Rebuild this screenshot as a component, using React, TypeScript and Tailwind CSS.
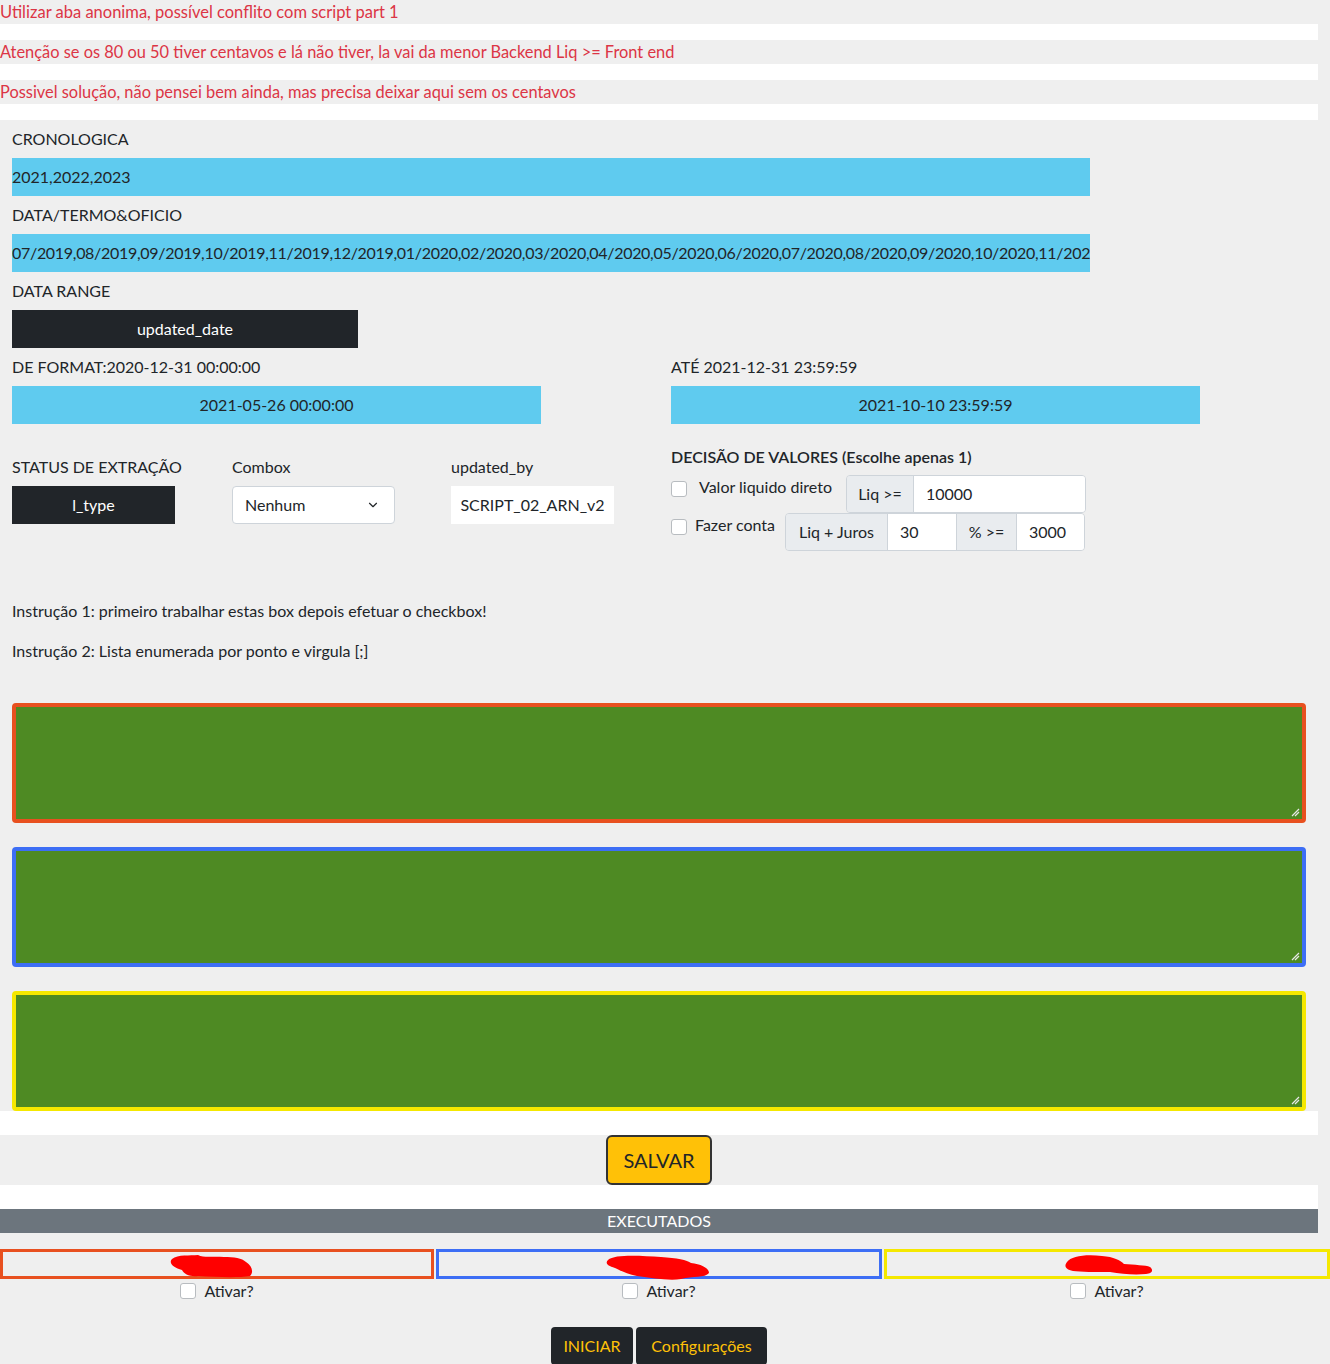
import { ChevronDown } from "lucide-react";

const textareas = [
  { border: "border-[#e8501f]" },
  { border: "border-[#3d6ef5]" },
  { border: "border-[#f5e800]" },
];

function Scribble({ variant }: { variant: number }) {
  // redacted names in the screenshot, drawn as red marker blobs
  if (variant === 0) {
    return (
      <svg width="88" height="28" viewBox="0 0 88 28">
        <path d="M4 7 C10 2 22 4 30 3 C36 6 44 4 56 5 C66 5 74 6 78 10 C84 14 86 20 82 24 C70 26 48 25 30 24 C22 25 16 22 14 18 C6 16 0 11 4 7 Z" fill="#ff0000" />
      </svg>
    );
  }
  if (variant === 1) {
    return (
      <svg width="108" height="30" viewBox="0 0 108 30">
        <path d="M3 8 C10 2 36 4 56 5 C72 6 82 8 86 11 C96 12 104 16 104 21 C100 26 88 24 76 27 C64 29 48 26 32 24 C22 22 14 18 10 16 C2 14 0 11 3 8 Z" fill="#ff0000" />
      </svg>
    );
  }
  return (
    <svg width="90" height="26" viewBox="0 0 90 26">
      <path d="M3 10 C7 4 22 2 38 4 C50 5 56 8 60 12 C70 13 82 13 86 15 C90 18 88 22 82 22 C70 23 58 22 46 20 C32 20 16 20 9 19 C1 17 0 14 3 10 Z" fill="#ff0000" />
    </svg>
  );
}

function Checkbox() {
  return <span className="inline-block h-4 w-4 shrink-0 rounded-[3px] border border-[#b8bcc0] bg-white" />;
}

export default function App() {
  return (
    <div className="min-h-[1364px] w-[1330px] overflow-hidden bg-[#efefef] font-['Lato','Liberation_Sans',sans-serif] text-base leading-6 text-[#212529]">
      {/* avisos */}
      <p className="h-6 text-[16.5px] text-[#dc3545]">Utilizar aba anonima, possível conflito com script part 1</p>
      <div className="h-4 w-[1318px] bg-white" />
      <p className="h-6 text-[16.4px] text-[#dc3545]">Atenção se os 80 ou 50 tiver centavos e lá não tiver, la vai da menor Backend Liq &gt;= Front end</p>
      <div className="h-4 w-[1318px] bg-white" />
      <p className="h-6 text-[16.4px] text-[#dc3545]">Possivel solução, não pensei bem ainda, mas precisa deixar aqui sem os centavos</p>
      <div className="h-4 w-[1318px] bg-white" />

      <div className="w-[1318px] px-3">
        <div className="mt-[7px]">CRONOLOGICA</div>
        <div className="mt-[7px] flex h-[38px] w-[1078px] items-center bg-[#5fcbef]">2021,2022,2023</div>
        <div className="mt-[7px]">DATA/TERMO&amp;OFICIO</div>
        <div className="mt-[7px] flex h-[38px] w-[1078px] items-center overflow-hidden whitespace-nowrap bg-[#5fcbef] tracking-[-0.3px]">
          07/2019,08/2019,09/2019,10/2019,11/2019,12/2019,01/2020,02/2020,03/2020,04/2020,05/2020,06/2020,07/2020,08/2020,09/2020,10/2020,11/202
        </div>
        <div className="mt-[7px]">DATA RANGE</div>
        <div className="mt-[7px] flex h-[38px] w-[346px] items-center justify-center bg-[#212529] text-white">updated_date</div>

        <div className="mt-[7px] flex">
          <div className="w-[659px]">
            <div>DE FORMAT:2020-12-31 00:00:00</div>
            <div className="mt-[7px] flex h-[38px] w-[529px] items-center justify-center bg-[#5fcbef]">2021-05-26 00:00:00</div>
          </div>
          <div>
            <div>ATÉ 2021-12-31 23:59:59</div>
            <div className="mt-[7px] flex h-[38px] w-[529px] items-center justify-center bg-[#5fcbef]">2021-10-10 23:59:59</div>
          </div>
        </div>

        <div className="flex">
          <div className="mt-[31px] w-[220px]">
            <div>STATUS DE EXTRAÇÃO</div>
            <div className="mt-[7px] flex h-[38px] w-[163px] items-center justify-center bg-[#212529] text-white">l_type</div>
          </div>
          <div className="mt-[31px] w-[219px]">
            <div>Combox</div>
            <div className="mt-[7px] flex h-[38px] w-[163px] items-center justify-between rounded border border-[#ced4da] bg-white pl-3 pr-[14px]">
              <span>Nenhum</span>
              <ChevronDown size={14} strokeWidth={2} />
            </div>
          </div>
          <div className="mt-[31px] w-[220px]">
            <div>updated_by</div>
            <div className="mt-[7px] flex h-[38px] w-[163px] items-center justify-center bg-white">SCRIPT_02_ARN_v2</div>
          </div>
          <div className="mt-[21px]">
            <div className="font-semibold">DECISÃO DE VALORES (Escolhe apenas 1)</div>
            <div className="mt-[6px] flex items-start">
              <div className="mt-1"><Checkbox /></div>
              <span className="ml-3 w-[139px] whitespace-nowrap">Valor liquido direto</span>
              <div className="ml-2 flex h-[38px] overflow-hidden rounded border border-[#ced4da]">
                <div className="flex w-[67px] items-center justify-center border-r border-[#ced4da] bg-[#e9ecef]">Liq &gt;=</div>
                <div className="flex w-[171px] items-center bg-white pl-3">10000</div>
              </div>
            </div>
            <div className="flex items-start">
              <div className="mt-1"><Checkbox /></div>
              <span className="ml-2 w-[82px] whitespace-nowrap">Fazer conta</span>
              <div className="ml-2 flex h-[38px] overflow-hidden rounded border border-[#ced4da]">
                <div className="flex w-[102px] items-center justify-center border-r border-[#ced4da] bg-[#e9ecef]">Liq + Juros</div>
                <div className="flex w-[68px] items-center bg-white pl-3">30</div>
                <div className="flex w-[61px] items-center justify-center border-x border-[#ced4da] bg-[#e9ecef]">% &gt;=</div>
                <div className="flex w-[67px] items-center bg-white pl-3">3000</div>
              </div>
            </div>
          </div>
        </div>

        <p className="mt-12">Instrução 1: primeiro trabalhar estas box depois efetuar o checkbox!</p>
        <p className="mt-4">Instrução 2: Lista enumerada por ponto e virgula [;]</p>

        <div className="mt-10 flex flex-col gap-6">
          {textareas.map((t, i) => (
            <div key={i} className={`relative h-[120px] w-[1294px] rounded-[4px] border-4 ${t.border} bg-[#4e8a23]`}>
              <svg className="absolute bottom-[2px] right-[2px]" width="9" height="9" viewBox="0 0 9 9">
                <path d="M8 1 L1 8 M8 4 L4 8" stroke="#e8e8e8" strokeWidth="1.2" />
              </svg>
            </div>
          ))}
        </div>
      </div>

      <div className="h-6 w-[1318px] bg-white" />
      <div className="flex w-[1318px] justify-center">
        <button className="h-[50px] w-[106px] rounded-md border-2 border-[#333] bg-[#ffc107] text-xl text-[#212529]">SALVAR</button>
      </div>
      <div className="h-6 w-[1318px] bg-white" />
      <div className="flex h-6 w-[1318px] items-center justify-center bg-[#6c757d] text-white">EXECUTADOS</div>

      <div className="mt-4 flex gap-[2px]">
        {[
          { w: "w-[434px]", b: "border-[#e8501f]", s: "ml-[-10px]" },
          { w: "w-[446px]", b: "border-[#3d6ef5]", s: "ml-0" },
          { w: "w-[446px]", b: "border-[#f5e800]", s: "ml-1" },
        ].map((c, i) => (
          <div key={i} className={`${c.w} flex flex-col items-center`}>
            <div className={`flex h-[30px] w-full items-start justify-center border-[3px] ${c.b}`}>
              <div className={c.s}><Scribble variant={i} /></div>
            </div>
            <div className="flex items-center gap-2">
              <Checkbox />
              <span>Ativar?</span>
            </div>
          </div>
        ))}
      </div>

      <div className="mt-6 flex w-[1318px] justify-center gap-[3px]">
        <button className="h-[38px] w-[82px] rounded bg-[#212529] text-[#ffc107]">INICIAR</button>
        <button className="h-[38px] w-[131px] rounded bg-[#212529] text-[#ffc107]">Configurações</button>
      </div>
    </div>
  );
}
